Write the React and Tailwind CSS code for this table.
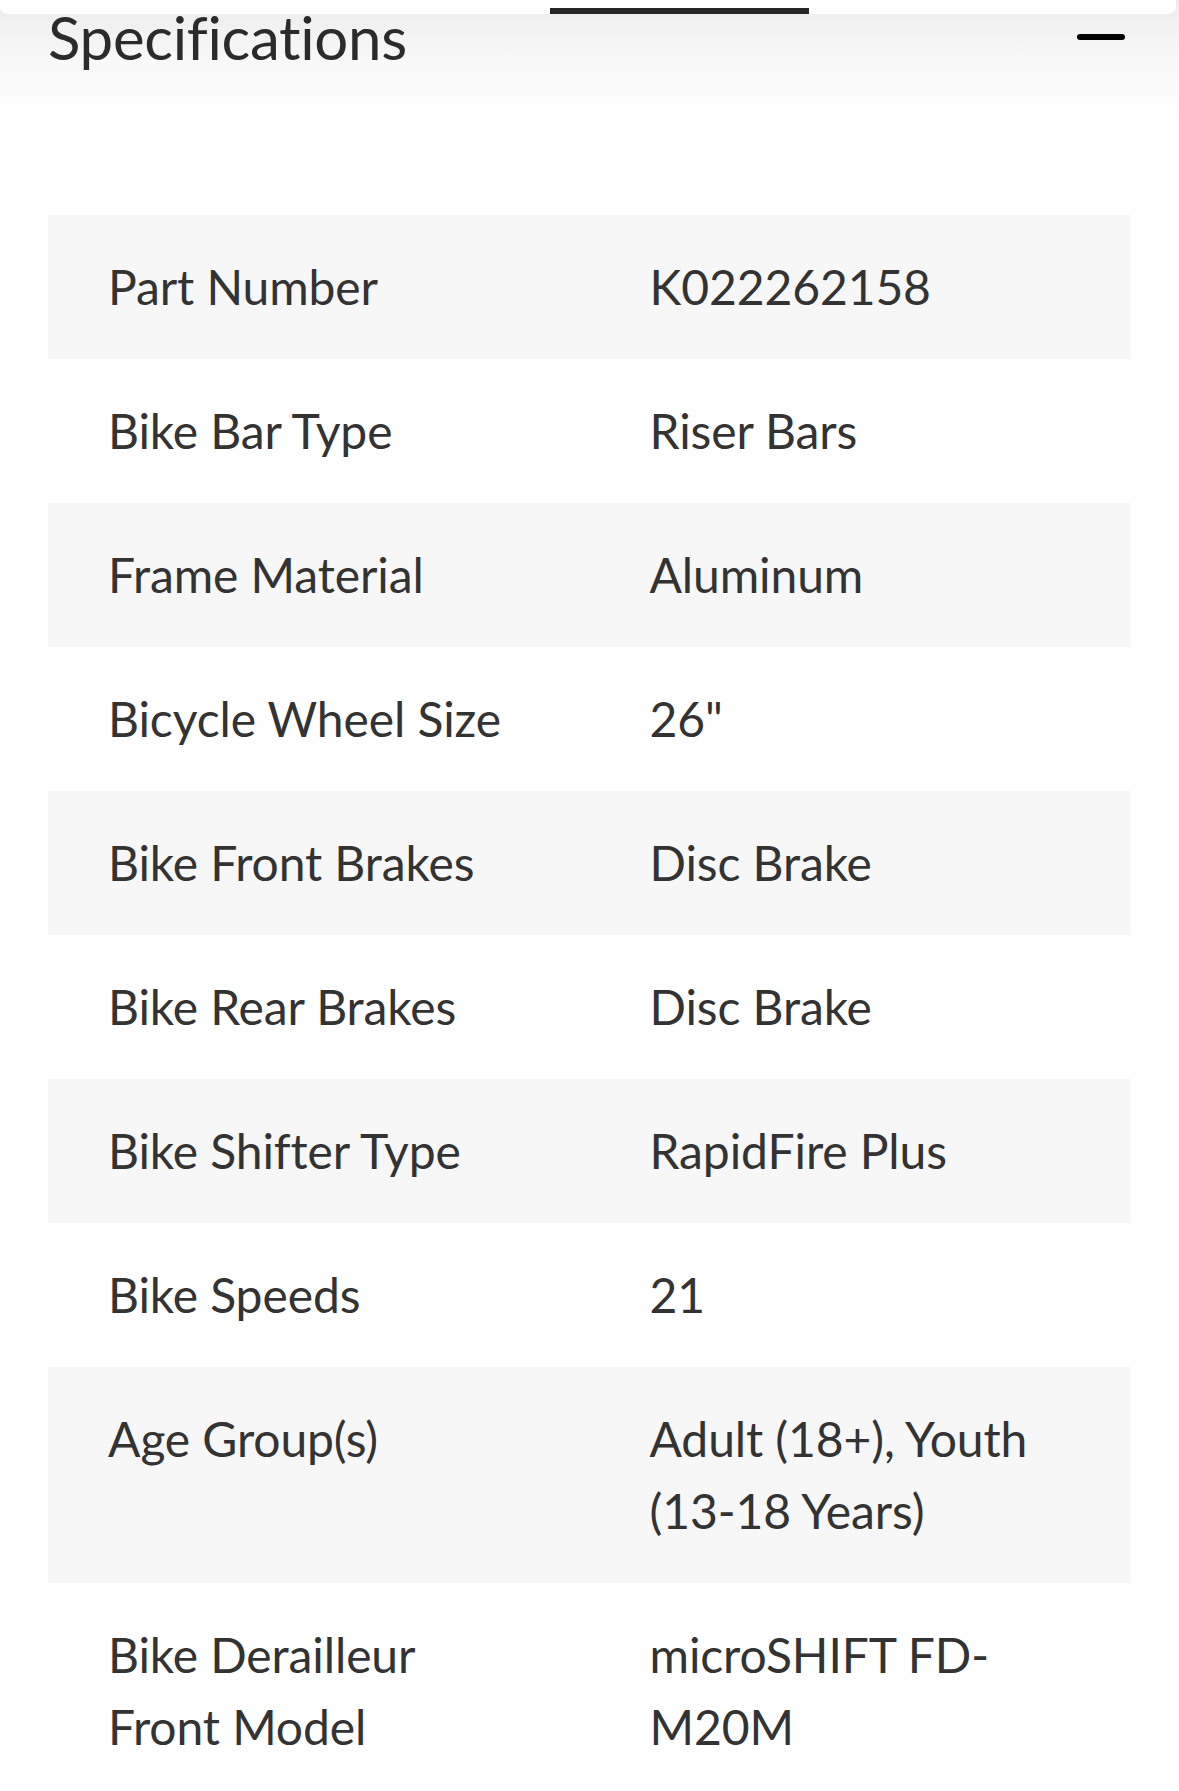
import React from "react";

const rows = [
  ["Part Number", "K022262158"],
  ["Bike Bar Type", "Riser Bars"],
  ["Frame Material", "Aluminum"],
  ["Bicycle Wheel Size", "26\""],
  ["Bike Front Brakes", "Disc Brake"],
  ["Bike Rear Brakes", "Disc Brake"],
  ["Bike Shifter Type", "RapidFire Plus"],
  ["Bike Speeds", "21"],
  ["Age Group(s)", "Adult (18+), Youth (13-18 Years)"],
  ["Bike Derailleur Front Model", "microSHIFT FD-M20M"],
];

export default function App() {
  return (
    <div className="relative w-full h-[1791px] overflow-hidden bg-white text-[#333333]" style={{ fontFamily: "Lato, 'Open Sans', sans-serif" }}>
      {/* header with shadow from the sticky bar above */}
      <div className="bg-gradient-to-b from-[#ececec] via-[#f8f8f8] to-white h-[120px]">
        <div className="flex items-center justify-between pl-[48px] pr-[54px] pt-[1px]">
          <h2 className="text-[60px] leading-[72px] font-normal text-[#2b2b2b] tracking-[-0.3px]">Specifications</h2>
          <div className="w-[48px] h-[6px] rounded-full bg-black" />
        </div>
      </div>

      {/* sticky bar overlay */}
      <div className="absolute top-0 left-0 right-[3px] h-[14px] bg-white rounded-b-[8px]">
        <div className="absolute left-[550px] top-[8px] w-[259px] h-[6px] bg-[#252525]" />
      </div>

      <div className="mt-[95px] mx-[48px]">
        {rows.map(([k, v], i) => (
          <div key={k} className={`grid grid-cols-2 text-[48px] leading-[72px] tracking-[-0.1px] ${i % 2 === 0 ? "bg-[#f7f7f7]" : "bg-white"}`}>
            <div className="pl-[60px] pr-[62px] py-[36px]">{k}</div>
            <div className="pl-[60px] pr-[62px] py-[36px]">{v}</div>
          </div>
        ))}
      </div>
    </div>
  );
}
